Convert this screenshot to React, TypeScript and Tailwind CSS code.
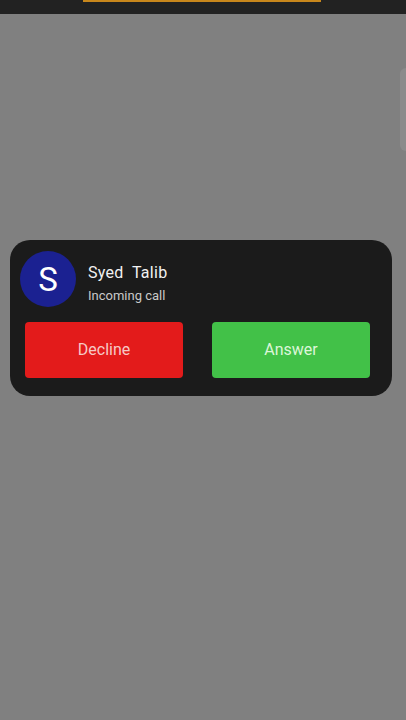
import React from "react";

export default function App() {
  return (
    <div className="w-[406px] h-[720px] bg-[#808080] flex flex-col overflow-hidden relative" style={{ fontFamily: "Roboto, 'Noto Sans', sans-serif" }}>
      <div className="h-[14px] bg-[#222222] flex justify-center shrink-0">
        <div className="w-[238px] h-[2px] bg-[#c8871c] ml-[-3px]"></div>
      </div>
      <div className="absolute right-0 top-[68px] w-[6px] h-[83px] rounded-l-[6px] bg-[#8b8b8b]"></div>
      <div className="mt-[226px] ml-[10px] w-[382px] h-[156px] rounded-[20px] bg-[#1b1b1b] flex flex-col">
        <div className="flex items-center pt-[11px] pl-[10px]">
          <div className="w-[56px] h-[56px] rounded-full bg-[#1b2191] flex items-center justify-center text-white text-[33px] leading-none">S</div>
          <div className="ml-[12px] flex flex-col mt-[9px]">
            <div className="text-[#f2f2f2] text-[16px] leading-[20px] tracking-[0.3px]">Syed&nbsp; Talib</div>
            <div className="text-[#c9c9c9] text-[13px] leading-[18px] mt-[4px]">Incoming call</div>
          </div>
        </div>
        <div className="flex mt-[15px] pl-[15px] gap-[29px]">
          <div className="w-[158px] h-[56px] rounded-[4px] bg-[#e31b1b] flex items-center justify-center text-[#f6c9c6] text-[16px]">Decline</div>
          <div className="w-[158px] h-[56px] rounded-[4px] bg-[#42c148] flex items-center justify-center text-[#dcf6d8] text-[16px]">Answer</div>
        </div>
      </div>
    </div>
  );
}
